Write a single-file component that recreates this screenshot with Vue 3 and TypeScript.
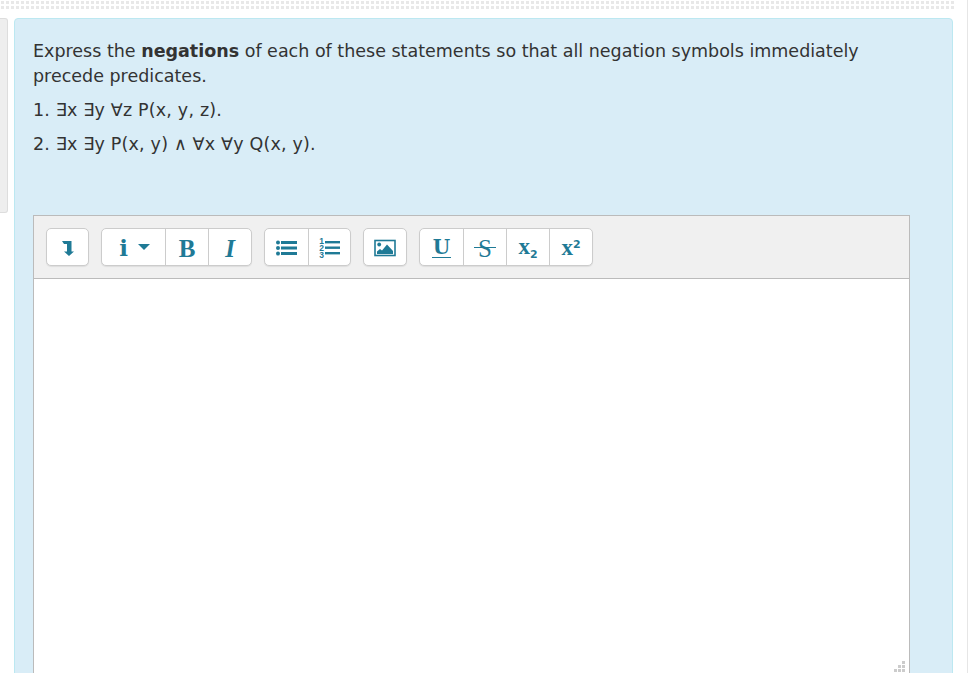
<template>
	<div class="page">
		<div class="dots"></div>
		<div class="body">
			<div class="side-tab"></div>
			<section class="panel">
				<div class="question">
					<p>Express the <strong>negations</strong> of each of these statements so that all negation symbols immediately precede predicates.</p>
					<p class="math">1. ∃x ∃y ∀z P(x, y, z).</p>
					<p class="math">2. ∃x ∃y P(x, y) ∧ ∀x ∀y Q(x, y).</p>
				</div>
				<div class="editor">
					<div class="toolbar">
						<div class="group">
							<button class="btn btn-small icon" type="button">
								<svg width="12" height="15" viewBox="0 0 12 15"><path d="M0 0h9.500v10.500h2.500l-5 4.500-5-4.500h3V3H2z" fill="currentColor" /></svg>
							</button>
						</div>
						<div class="group">
							<button class="btn btn-wide" type="button">
								<span class="glyph-i">i</span>
								<svg width="12" height="6" viewBox="0 0 12 6"><path d="M0 0h12L6 6z" fill="currentColor" /></svg>
							</button>
							<button class="btn serif glyph-b" type="button">B</button>
							<button class="btn serif glyph-it" type="button">I</button>
						</div>
						<div class="group">
							<button class="btn icon" type="button">
								<svg width="21" height="16" viewBox="0 0 21 16" fill="currentColor">
									<circle cx="2" cy="2.5" r="2" /><circle cx="2" cy="8" r="2" /><circle cx="2" cy="13.5" r="2" />
									<rect x="5" y="1" width="16" height="3" /><rect x="5" y="6.5" width="16" height="3" /><rect x="5" y="12" width="16" height="3" />
								</svg>
							</button>
							<button class="btn btn-narrow icon" type="button">
								<span class="numbers">
									<span class="digits">1<br />2<br />3</span>
									<svg width="15" height="14" viewBox="0 0 15 14" fill="currentColor">
										<rect y="0" width="15" height="2.4" /><rect y="5.5" width="15" height="2.4" /><rect y="11" width="15" height="2.4" />
									</svg>
								</span>
							</button>
						</div>
						<div class="group">
							<button class="btn btn-narrow icon" type="button">
								<svg width="22" height="18" viewBox="0 0 22 18">
									<rect x="1" y="1.5" width="20" height="15" fill="none" stroke="currentColor" stroke-width="1.6" />
									<circle cx="5.2" cy="5.500" r="1.9" fill="currentColor" />
									<path d="M3 15v-2.500l3-2.500 2 1.500 5-6 6 6.500v3z" fill="currentColor" />
								</svg>
							</button>
						</div>
						<div class="group">
							<button class="btn" type="button"><span class="glyph-u">U</span></button>
							<button class="btn" type="button"><span class="strike serif">S</span></button>
							<button class="btn" type="button"><span class="glyph-x">x<small class="sub">2</small></span></button>
							<button class="btn" type="button"><span class="glyph-x">x<small class="sup">2</small></span></button>
						</div>
					</div>
					<div class="content">
						<div class="resize-grip">
							<i v-for="dot in gripDots" :key="dot" :class="`dot-${dot}`"></i>
						</div>
					</div>
				</div>
			</section>
		</div>
	</div>
</template>

<script setup lang="ts">
const gripDots: number[] = [1, 2, 3, 4, 5, 6]
</script>

<style>
html,
body {
	margin: 0;
	background: #fff;
	overflow: hidden;
}
</style>

<style scoped>
.page {
	width: 967px;
	height: 673px;
	overflow: hidden;
	border-right: 1px solid #e6e6e6;
	font-family: "DejaVu Sans", sans-serif;
	color: #333;
}

.dots {
	width: 954px;
	height: 9px;
	background: repeating-linear-gradient(90deg, #fff 0 1px, #e8e8e8 1px 4px, #fff 4px 5px);
	-webkit-mask: repeating-linear-gradient(180deg, transparent 0 1px, #000 1px 4px, transparent 4px 5px);
	mask: repeating-linear-gradient(180deg, transparent 0 1px, #000 1px 4px, transparent 4px 5px);
}

.body {
	display: flex;
	align-items: flex-start;
	margin-top: 9px;
	gap: 7px;
}

.side-tab {
	width: 8px;
	height: 195px;
	flex: none;
	box-sizing: border-box;
	background: #eee;
	border: 1px solid #ddd;
	border-left: 0;
	border-radius: 0 3px 3px 0;
	margin-right: -1px;
}

.panel {
	width: 939px;
	height: 700px;
	flex: none;
	box-sizing: border-box;
	padding: 20px 42px 0 18px;
	background: #d9edf7;
	border: 1px solid #bce8f1;
	border-radius: 4px;
}

.question {
	height: 176px;
	font-size: 17.5px;
	line-height: 25px;
}

.question p {
	margin: 0 0 9px;
}

.question .math {
	letter-spacing: 0.18px;
}

.editor {
	border: 1px solid #bbb;
	border-bottom: 0;
	background: #fff;
}

.toolbar {
	display: flex;
	gap: 12px;
	height: 63px;
	box-sizing: border-box;
	padding: 12px 12px 0;
	background: #f0f0f0;
	border-bottom: 1px solid #bbb;
}

.group {
	display: flex;
	height: 38px;
	box-sizing: border-box;
	background: #fff;
	border: 1px solid #ccc;
	border-radius: 5px;
	box-shadow: 0 1px 1px rgba(0, 0, 0, 0.08);
}

.btn {
	display: flex;
	align-items: center;
	justify-content: center;
	gap: 10px;
	width: 43px;
	height: 100%;
	padding: 0;
	border: 0;
	border-left: 1px solid #ccc;
	background: none;
	color: #1f7a96;
	box-sizing: border-box;
}

.btn:first-child {
	border-left: 0;
}

.btn-small {
	width: 41px;
}

.btn-narrow {
	width: 42px;
}

.btn-wide {
	width: 63px;
	padding-left: 2px;
}

.icon svg,
.numbers {
	margin-top: 2px;
}

.serif {
	font-family: "Liberation Serif", serif;
}

.glyph-i {
	font-family: "DejaVu Serif", serif;
	font-size: 23px;
	font-weight: 700;
	line-height: 1;
}

.glyph-b,
.glyph-it {
	font-size: 25px;
	font-weight: 700;
	line-height: 1;
	padding-top: 2px;
}

.glyph-it {
	font-style: italic;
}

.glyph-u {
	font-family: "DejaVu Serif", serif;
	font-size: 20px;
	font-weight: 700;
	line-height: 19px;
	border-bottom: 1.5px solid currentColor;
	padding: 0 1px;
	margin-top: 2px;
}

.strike {
	position: relative;
	font-size: 25px;
	line-height: 1;
	padding-top: 2px;
}

.strike::after {
	content: "";
	position: absolute;
	left: -4px;
	right: -4px;
	top: 13px;
	height: 1.5px;
	background: currentColor;
}

.glyph-x {
	display: flex;
	font-family: "Liberation Serif", serif;
	font-size: 23px;
	font-weight: 700;
	line-height: 22px;
	margin-top: 2px;
}

.glyph-x small {
	font-family: "DejaVu Sans", sans-serif;
	font-size: 11px;
	line-height: 11px;
}

.sub {
	margin-top: 13px;
}

.sup {
	margin-top: 2px;
}

.numbers {
	display: flex;
	align-items: center;
	gap: 1px;
}

.numbers svg {
	margin-top: 0;
}

.digits {
	font-family: "Liberation Sans", sans-serif;
	font-size: 8.5px;
	line-height: 7px;
	font-weight: 700;
}

.content {
	position: relative;
	height: 420px;
	background: #fff;
}

.resize-grip {
	position: absolute;
	top: 382px;
	right: 3px;
	width: 12px;
	height: 12px;
}

.resize-grip i {
	position: absolute;
	width: 3px;
	height: 3px;
	background: #ccc;
}

.dot-1 { left: 8px; top: 0; }
.dot-2 { left: 4px; top: 4px; }
.dot-3 { left: 8px; top: 4px; }
.dot-4 { left: 0; top: 8px; }
.dot-5 { left: 4px; top: 8px; }
.dot-6 { left: 8px; top: 8px; }
</style>
